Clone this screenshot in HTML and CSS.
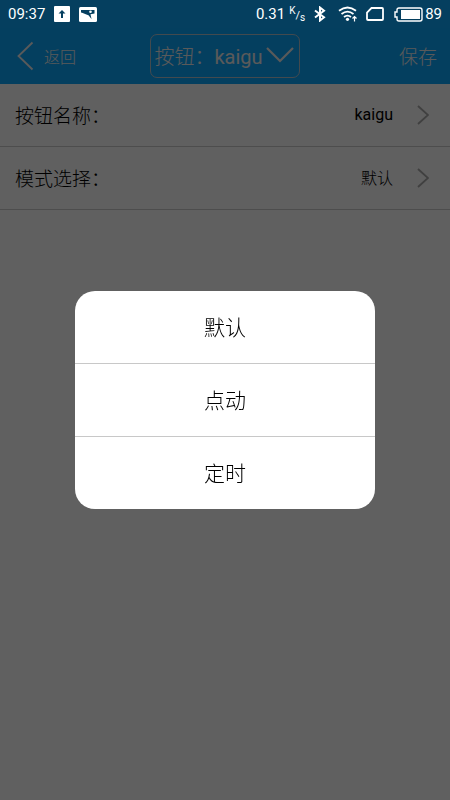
FILE: index.html
```html
<!DOCTYPE html>
<html lang="zh-CN">
<head>
    <meta charset="UTF-8">
    <meta name="viewport" content="width=device-width, initial-scale=1">
    <title>按钮设置</title>
    <link rel="stylesheet" href="styles.css">
</head>
<body>

<div class="status">
    <span class="clock">09:37</span>
    <svg class="upload" width="16" height="16" viewBox="0 0 16 16">
        <rect width="16" height="16" rx="1" fill="#fff"/>
        <path d="M8 4 4.500 7.500H7V12h2V7.500h2.500z" fill="#053f5f"/>
    </svg>
    <svg width="18" height="15" viewBox="0 0 18 15">
        <rect width="18" height="15" rx="1.500" fill="#fff"/>
        <path d="M2 3h13.500v3.500l-4 .8 1 4.700-3-3.800C6.500 7.500 4.500 6 2 5.500z" fill="#053f5f"/>
        <circle cx="11.500" cy="4.800" r="1.300" fill="#fff"/>
    </svg>
    <span class="speed">0.31</span>
    <span class="unit"><sup>K</sup>/<sub>s</sub></span>
    <svg class="bluetooth" width="14" height="16" viewBox="0 0 14 16">
        <path d="M2 4.500 11 11.300 7 14.500v-13L11 4.700 2 11.500" fill="none" stroke="#fff" stroke-width="2"/>
    </svg>
    <svg class="wifi" width="20" height="16" viewBox="0 0 20 16">
        <g fill="none" stroke="#fff" stroke-width="1.800">
            <path d="M1 4.800Q9.500-1.800 18 4.800"/>
            <path d="M3.500 8Q9.500 3.200 15.500 8"/>
            <path d="M6 11Q9.500 8.200 13 11"/>
            <path d="M16.500 15.500V11M14.500 12.500l2-2 2 2" stroke-width="1.200"/>
        </g>
        <circle cx="9.500" cy="13.300" r="1.600" fill="#fff"/>
    </svg>
    <svg class="sim" width="18" height="14" viewBox="0 0 18 14">
        <path d="M5.500 1H16q1 0 1 1v10q0 1-1 1H2q-1 0-1-1V5.500z" fill="none" stroke="#fff" stroke-width="1.800"/>
    </svg>
    <svg class="battery" width="29" height="15" viewBox="0 0 29 15">
        <path d="M5 1h21q2 0 2 2v9q0 2-2 2H5q-2 0-2-2v-2H1V5h2V3q0-2 2-2z" fill="none" stroke="#fff" stroke-width="1.400"/>
        <rect x="7" y="3" width="19" height="9" fill="#fff"/>
    </svg>
    <span class="percent">89</span>
</div>

<header class="header">
    <a class="back" href="#">
        <svg width="17" height="30" viewBox="0 0 17 30">
            <path d="M15.500 1.500 1.500 15l14 13.500" fill="none" stroke="currentColor" stroke-width="1.800"/>
        </svg>
        返回
    </a>
    <button class="title" type="button">
        <span>按钮：<span class="latin">kaigu</span></span>
        <svg width="28" height="16" viewBox="0 0 28 16">
            <path d="M1 1l13 13L27 1" fill="none" stroke="currentColor" stroke-width="2.200"/>
        </svg>
    </button>
    <button class="save" type="button">保存</button>
</header>

<main>
    <a class="row" href="#">
        <span class="name">按钮名称：</span>
        <span class="value latin">kaigu</span>
        <svg width="12" height="20" viewBox="0 0 12 20">
            <path d="M1 1l10 9-10 9" fill="none" stroke="#a0a0a0" stroke-width="1.800"/>
        </svg>
    </a>
    <a class="row" href="#">
        <span class="name">模式选择：</span>
        <span class="value">默认</span>
        <svg width="12" height="20" viewBox="0 0 12 20">
            <path d="M1 1l10 9-10 9" fill="none" stroke="#a0a0a0" stroke-width="1.800"/>
        </svg>
    </a>
</main>

<div class="mask">
    <div class="dialog" role="dialog" aria-label="模式选择">
        <button type="button">默认</button>
        <button type="button">点动</button>
        <button type="button">定时</button>
    </div>
</div>

</body>
</html>
```
FILE: styles.css
```css
*{margin: 0; padding: 0; box-sizing: border-box;}
body{
    min-height: 100vh;
    background: #efefef;
    color: #000;
    font-family: Roboto, "Noto Sans CJK SC", sans-serif;
    font-weight: 300;
}
a{
    color: inherit;
    text-decoration: none;
}
button{
    border: none;
    background: none;
    color: inherit;
    font: inherit;
    cursor: pointer;
}
svg{
    flex: none;
}
.latin{
    font-weight: 400;
}
/* the status bar stays bright above the mask */
.status{
    position: relative;
    z-index: 2;
    display: flex;
    align-items: center;
    height: 28px;
    padding: 0 8px;
    background: #053f5f;
    color: #fff;
    font-size: 15px;
    font-weight: 400;
}
.upload{
    margin: 0 9px;
}
.speed{
    margin-left: auto;
}
.unit{
    margin-left: 4px;
    font-size: 11px;
}
.unit sup, .unit sub{
    font-size: 10px;
    line-height: 1;
}
.unit sub{
    vertical-align: -2px;
}
.bluetooth{
    margin-left: 8px;
}
.wifi{
    margin-left: 11px;
}
.sim{
    margin-left: 8px;
}
.battery{
    margin: 0 2px 0 10px;
}
.header{
    display: grid;
    grid-template-columns: 1fr auto 1fr;
    align-items: center;
    height: 56px;
    padding: 0 13px;
    background: #0c9eee;
    color: #e0e0e0;
}
.back{
    display: flex;
    align-items: center;
    gap: 10px;
    padding-left: 4px;
    font-size: 16px;
}
.title{
    display: flex;
    align-items: center;
    gap: 3px;
    height: 44px;
    padding: 0 5px 0 3px;
    border: 1px solid #a8b8c4;
    border-radius: 7px;
    font-size: 20px;
}
.save{
    justify-self: end;
    font-size: 19px;
}
.row{
    display: flex;
    align-items: center;
    height: 63px;
    padding: 0 21px 0 15px;
    border-bottom: 1px solid #c0c0c0;
}
.name{
    flex: 1;
    font-size: 19px;
}
.value{
    margin-right: 24px;
    font-size: 16px;
}
.header button, .name, .value{
    padding-bottom: 2px;
}
.mask{
    position: fixed;
    inset: 0;
    z-index: 1;
    display: flex;
    align-items: center;
    justify-content: center;
    padding: 0 75px;
    background: rgba(0,0,0,0.6);
}
.dialog{
    width: 100%;
    border-radius: 20px;
    background: #fff;
    overflow: hidden;
}
.dialog button{
    display: block;
    width: 100%;
    height: 72px;
    padding-bottom: 2px;
    font-size: 21px;
}
.dialog button + button{
    height: 73px;
    border-top: 1px solid #c8c8c8;
}
```
